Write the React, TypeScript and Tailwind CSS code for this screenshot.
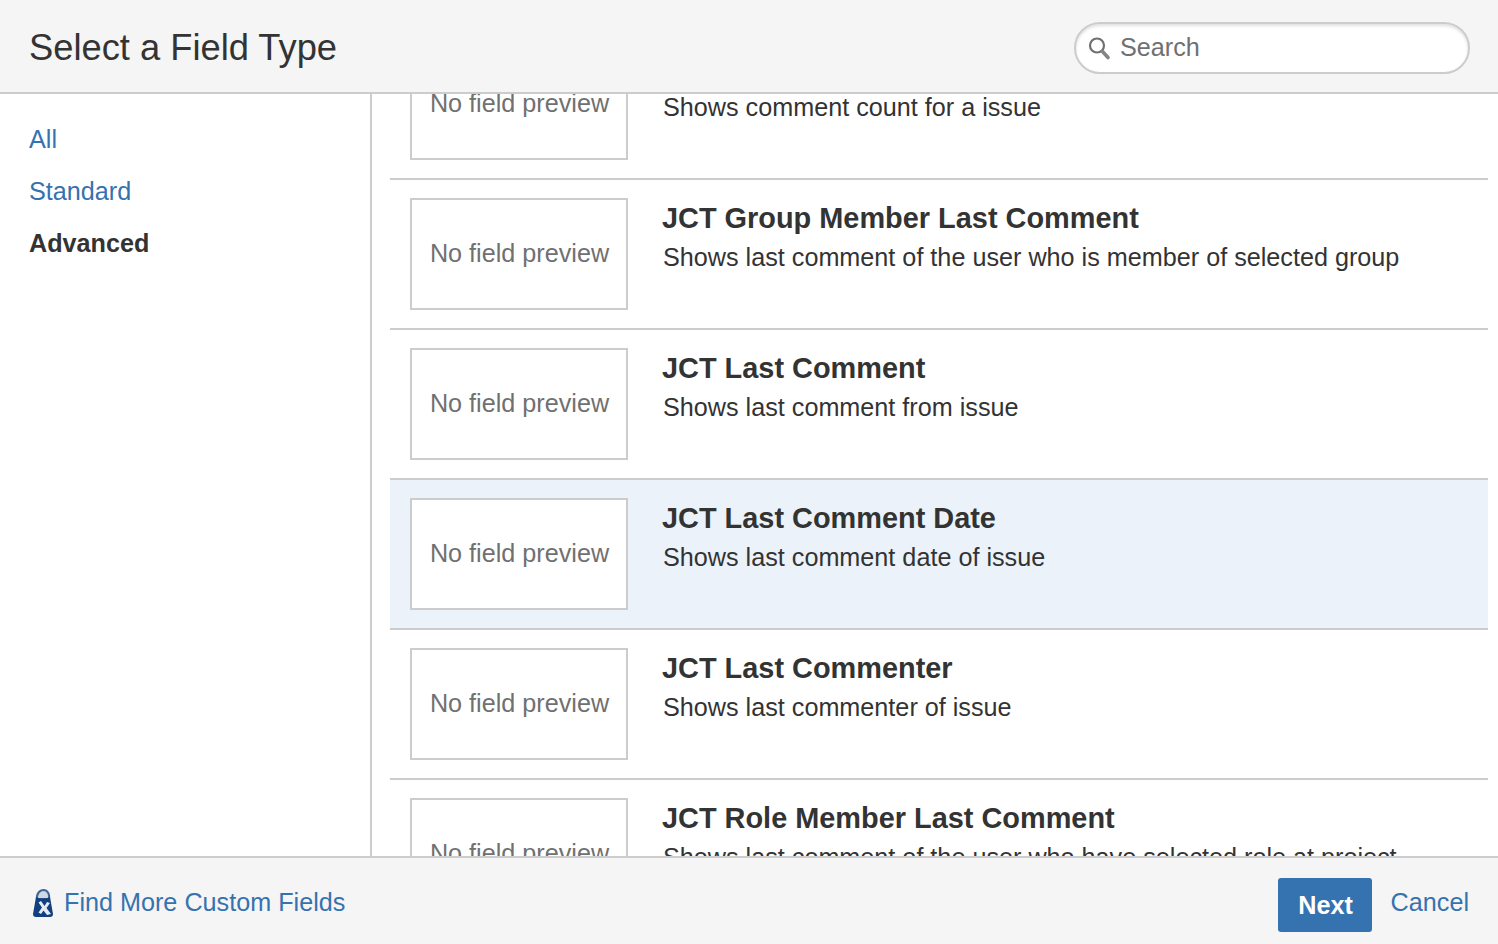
const font = "[font-family:'Liberation_Sans',Arial,sans-serif]";

const fields = [
  { name: "", desc: "Shows comment count for a issue" },
  { name: "JCT Group Member Last Comment", desc: "Shows last comment of the user who is member of selected group" },
  { name: "JCT Last Comment", desc: "Shows last comment from issue" },
  { name: "JCT Last Comment Date", desc: "Shows last comment date of issue", selected: true },
  { name: "JCT Last Commenter", desc: "Shows last commenter of issue" },
  { name: "JCT Role Member Last Comment", desc: "Shows last comment of the user who have selected role at project" },
];

function SearchIcon() {
  return (
    <svg width="24" height="24" viewBox="0 0 24 24" fill="none" className="shrink-0">
      <circle cx="10" cy="9.5" r="7" stroke="#6f6f6f" strokeWidth="2.2" />
      <path d="M15.5 15.5 L21 21.5" stroke="#858585" strokeWidth="3.6" strokeLinecap="round" />
    </svg>
  );
}

function BagIcon() {
  return (
    <svg width="22" height="30" viewBox="0 0 22 30" className="shrink-0">
      <path d="M4 12 C3 5 7 1 11.5 1 C16 1 19 5 18 12 Z" fill="#3f6595" />
      <path d="M6 10 C6 6 8.5 3 11.5 3 C14.5 3 16.5 6 16 10 Z" fill="#cfd9e4" />
      <path d="M4 9 C8 11 14 11 18 9 L21 26 C21 28 20 29 18 29 L4 29 C2 29 1 28 1 26 Z" fill="#123f7e" />
      <path d="M9 13 L12.5 18 L15 14 L18 15 L14.5 20 L19 26 L15 27 L11.5 22.5 L9 26 L6.5 24.5 L10 19.5 L6.5 14.5 Z" fill="#e6ebf1" />
    </svg>
  );
}

function FieldRow({ name, desc, selected }: { name: string; desc: string; selected?: boolean }) {
  return (
    <div className={`flex h-[150px] border-b-2 border-[#cccccc] pt-[18px] pl-5 ${selected ? "bg-[#ebf2f9]" : ""}`}>
      <div className="flex h-[112px] w-[218px] shrink-0 justify-center border-2 border-[#cccccc] bg-white pt-[28px] pl-px text-[25.2px] leading-[50px] text-[#707070]">
        <span className="h-[50px]">No field preview</span>
      </div>
      <div className="ml-[34px] min-w-0">
        <div className="h-[40px] whitespace-nowrap text-[28.9px] leading-[40px] font-bold text-[#333333]">{name}</div>
        <div className="-mt-px pl-px whitespace-nowrap text-[25.2px] leading-[40px] text-[#333333]">{desc}</div>
      </div>
    </div>
  );
}

export default function App() {
  return (
    <div className={`flex h-[944px] w-[1498px] flex-col overflow-hidden bg-white ${font}`}>
      <header className="flex h-[94px] shrink-0 items-center justify-between border-b-2 border-[#cccccc] bg-[#f5f5f5] pt-1 pr-7 pl-[29px]">
        <h1 className="text-[36.3px] leading-[48px] font-normal text-[#333333]">Select a Field Type</h1>
        <div className="flex h-[52px] w-[396px] items-center gap-[9px] rounded-[26px] border-2 border-[#cccccc] bg-white pl-[11px] shadow-[inset_0_2px_3px_rgba(0,0,0,0.12)]">
          <SearchIcon />
          <span className="-mt-px text-[25.2px] text-[#707070]">Search</span>
        </div>
      </header>

      <div className="flex min-h-0 flex-1">
        <nav className="flex w-[372px] shrink-0 flex-col border-r-2 border-[#cccccc] pt-[19px] pl-[29px] text-[25.2px] leading-[52px]">
          <a className="text-[#3572b0]">All</a>
          <a className="text-[#3572b0]">Standard</a>
          <a className="font-bold text-[#333333]">Advanced</a>
        </nav>
        <div className="min-w-0 flex-1 overflow-hidden pr-[10px] pl-[18px]">
          <div className="-mt-[64px]">
            {fields.map((f, i) => (
              <FieldRow key={i} name={f.name} desc={f.desc} selected={f.selected} />
            ))}
          </div>
        </div>
      </div>

      <footer className="flex h-[88px] shrink-0 items-center justify-between border-t-2 border-[#cccccc] bg-[#f5f5f5] pt-2 pr-[29px] pl-[32px]">
        <a className="-mt-1 flex items-center gap-[10px] text-[25.2px] text-[#3572b0]">
          <BagIcon />
          Find More Custom Fields
        </a>
        <div className="flex items-center gap-[19px]">
          <button className="h-[54px] w-[94px] rounded-[3px] bg-[#3572b0] pt-0.5 pl-0.5 text-[25.2px] font-bold text-white">Next</button>
          <a className="-mt-[4px] text-[25.2px] text-[#3572b0]">Cancel</a>
        </div>
      </footer>
    </div>
  );
}
